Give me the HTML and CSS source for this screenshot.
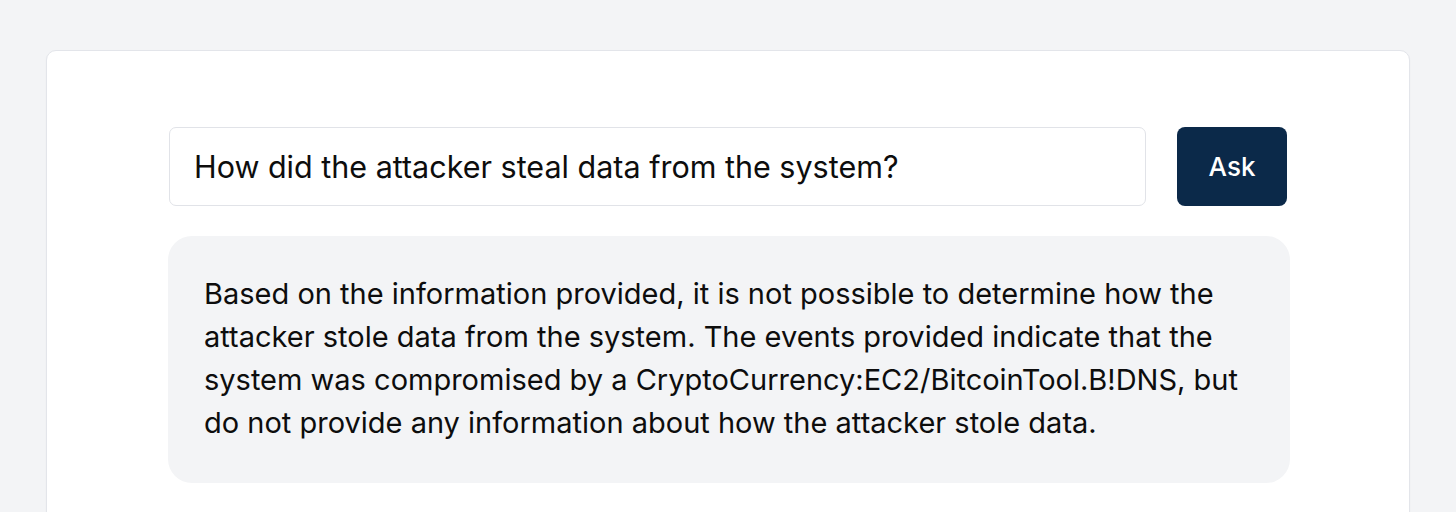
FILE: index.html
```html
<!DOCTYPE html>
<html>
<head>
<meta charset="utf-8">
<link rel="stylesheet" href="styles.css">
</head>
<body>
<div class="page">
  <div class="card">
    <div class="ask-row">
      <div class="input">How did the attacker steal data from the system?</div>
      <button class="ask-btn">Ask</button>
    </div>
    <div class="answer">Based on the information provided, it is not possible to determine how the attacker stole data from the system. The events provided indicate that the system was compromised by a CryptoCurrency:EC2/BitcoinTool.B!DNS, but do not provide any information about how the attacker stole data.</div>
  </div>
</div>
</body>
</html>
```
FILE: styles.css
```css
html, body {
  margin: 0;
  padding: 0;
  background: #f3f4f6;
  font-family: Inter, "Noto Sans", sans-serif;
  height: 512px;
  overflow: hidden;
}
.page {
  padding: 50px 46px 0 46px;
}
.card {
  background: #ffffff;
  border: 1px solid #e3e5ea;
  border-radius: 10px;
  padding: 76px 119px 40px 121px;
  height: 600px;
  box-shadow: 0 1px 2px rgba(0,0,0,0.04);
}
.ask-row {
  display: flex;
  gap: 31px;
  margin-right: 3px;
}
.input {
  flex: 1;
  height: 77px;
  border: 1px solid #e1e3e8;
  border-radius: 7px;
  display: flex;
  align-items: center;
  padding-left: 24px;
  font-size: 30.5px;
  color: #0d0d0d;
  margin-left: 1px;
}
.ask-btn {
  width: 110px;
  height: 79px;
  background: #0b2949;
  color: #ffffff;
  border: none;
  border-radius: 8px;
  font-family: Inter, "Noto Sans", sans-serif;
  font-size: 26px;
  font-weight: 500;
}
.answer {
  margin-top: 30px;
  background: #f3f4f6;
  border-radius: 24px;
  padding: 36px 36px 39px 36px;
  font-size: 29px;
  line-height: 43px;
  color: #0d0d0d;
}
```
